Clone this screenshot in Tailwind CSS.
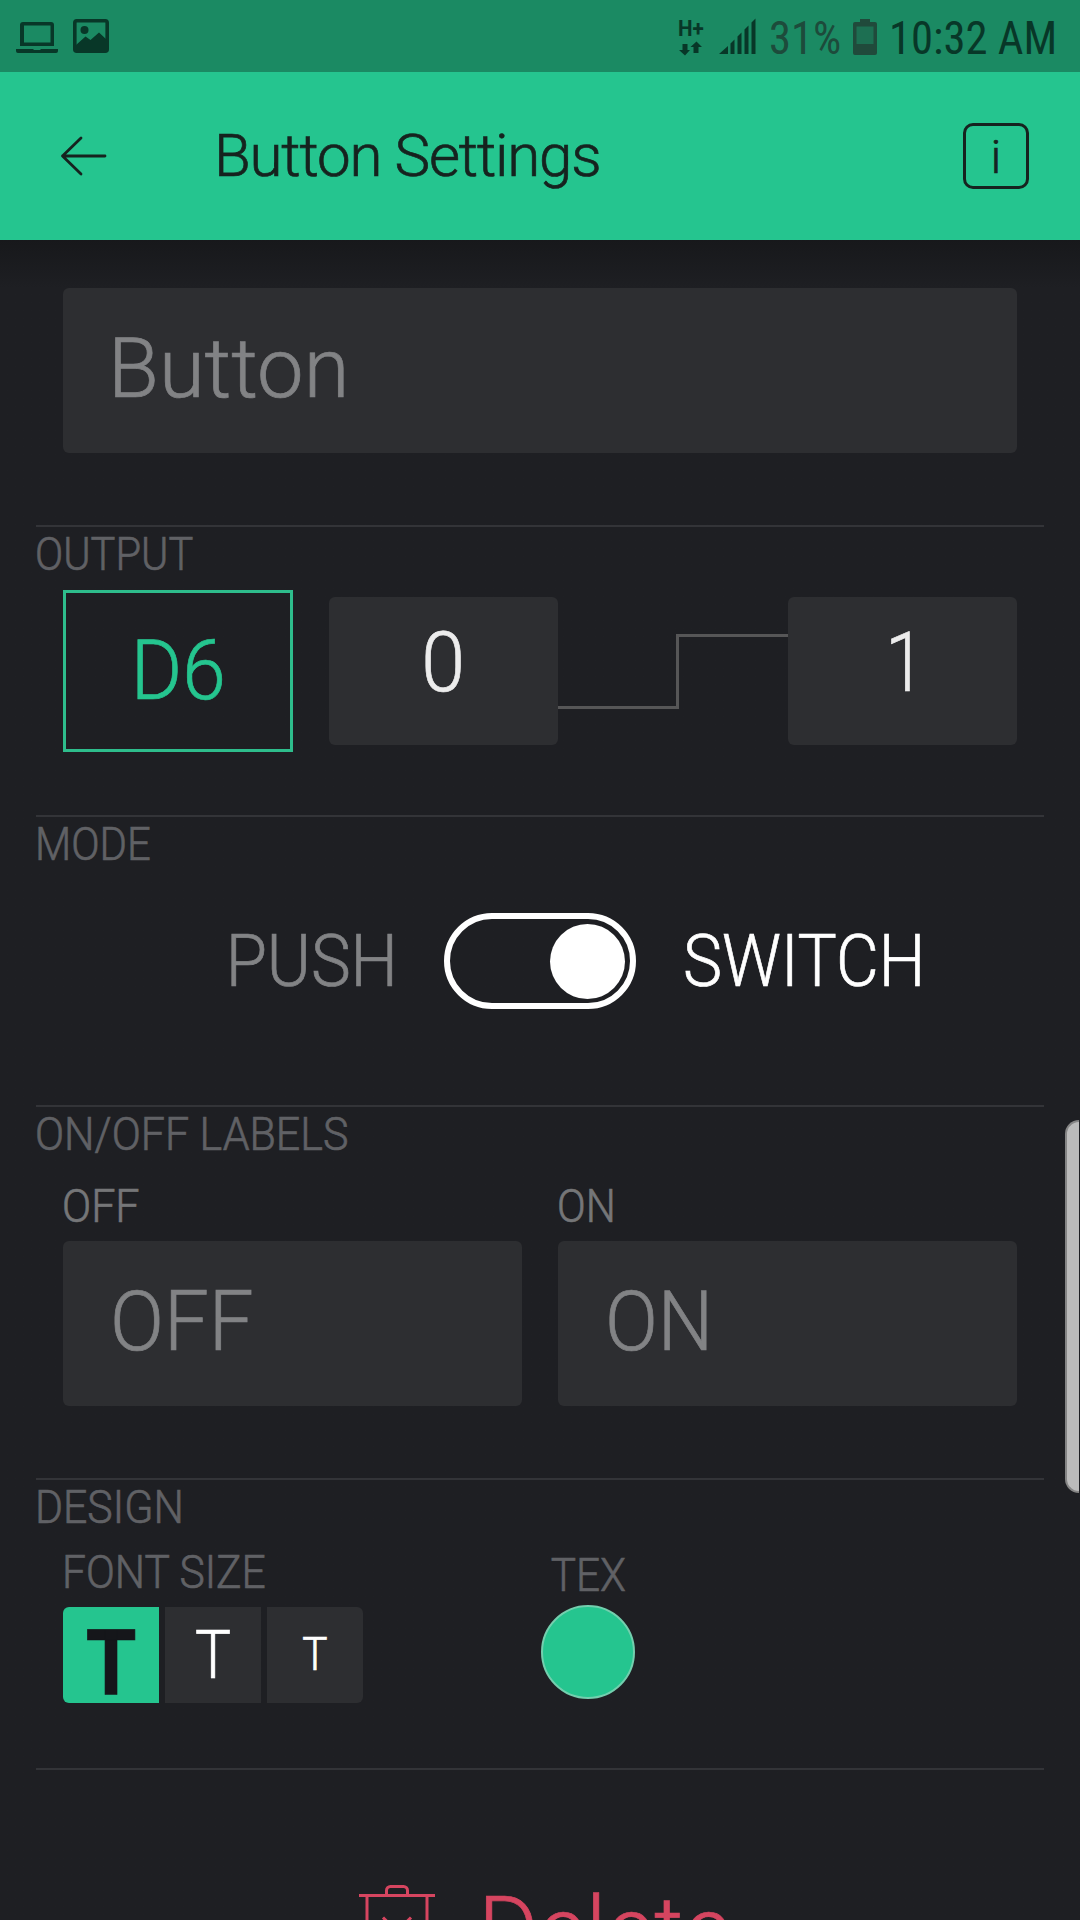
<!DOCTYPE html>
<html lang="en">
<head>
    <meta charset="UTF-8" />
    <title>Button Settings</title>
    <script src="https://cdn.jsdelivr.net/npm/@tailwindcss/browser@4"></script>
</head>
<body class="bg-[#1e1f23] font-['Roboto',sans-serif] font-light">
<div class="relative flex h-[1920px] w-[1080px] flex-col overflow-hidden">

    <!-- Status bar -->
    <div class="flex h-[72px] shrink-0 items-center bg-[#1b8a63] pl-4 text-[#083728]">
        <svg class="mt-[3px] h-[33px] w-[42px]" viewBox="0 0 42 33" fill="currentColor">
            <path fill-rule="evenodd" d="M7 1h28a3 3 0 0 1 3 3v21H4V4a3 3 0 0 1 3-3zm1 3.500v17h26.500v-17z" />
            <path d="M0 28h17l1 1h6l1-1h17v2a2 2 0 0 1-2 2H2a2 2 0 0 1-2-2z" />
        </svg>
        <svg class="ml-[15px] h-[34px] w-9" viewBox="0 0 36 34">
            <rect x="1.800" y="1.800" width="32.400" height="30.400" rx="2" fill="none" stroke="currentColor" stroke-width="3.600" />
            <circle cx="11.500" cy="11" r="4" fill="currentColor" />
            <path fill="currentColor" d="M3 26l9.500-8.500 5 3.500 8.500-7.500 8 7.500v11H3z" />
        </svg>
        <div class="ml-auto flex w-[403px] items-center">
            <div class="flex w-[42px] flex-col pt-[3px] pl-px">
                <span class="h-[20px] origin-left scale-x-[0.94] text-[22px] leading-[20px] font-bold">H+</span>
                <svg class="mt-[2px] ml-px h-[15px] w-[23px]" viewBox="0 0 23 15" fill="currentColor">
                    <path d="M3.500 3h5v6H11l-5 5.500L0 9h3.500z" />
                    <path d="M14.500 12h5V6H23l-5.500-5.500L11.500 6h3z" />
                </svg>
            </div>
            <svg class="h-9 w-[37px]" viewBox="0 0 37 36" fill="currentColor">
                <path d="M0 36L9 28v8zM11.500 25.500l4-4V36h-4zM18.500 18.500l4-4V36h-4zM25.500 11.500l4-4V36h-4zM32.500 4.500l4-4V36h-4z" />
            </svg>
            <span class="ml-[13px] w-[84px] pt-1 text-[46px] leading-[72px] font-normal text-[#1d4b3b] [font-stretch:75%]"><span class="inline-block origin-left scale-x-[0.97]">31%</span></span>
            <svg class="mt-0.5 h-9 w-6" viewBox="0 0 24 36">
                <path fill="#204a3b" d="M7 0h10v3h5a2 2 0 0 1 2 2v29a2 2 0 0 1-2 2H2a2 2 0 0 1-2-2V5a2 2 0 0 1 2-2h5z" />
                <path fill="#1d6f52" d="M3.500 7.500h17V25h-17z" />
            </svg>
            <span class="ml-3 pt-1 text-[46px] leading-[72px] font-normal whitespace-nowrap [font-stretch:75%]"><span class="inline-block origin-left scale-x-[0.97]">10:32 AM</span></span>
        </div>
    </div>

    <!-- App bar -->
    <header class="flex h-[168px] shrink-0 items-center bg-[#25c58f] pr-[51px] pl-[60px] text-[#16231f] [-webkit-text-stroke:0.7px]">
        <svg class="h-10 w-[47px]" viewBox="0 0 47 40" fill="none" stroke="currentColor" stroke-width="2.800" stroke-linecap="round" stroke-linejoin="round">
            <path d="M21 2L2.500 20 21 38M2.500 20H45" />
        </svg>
        <h1 class="ml-[107px] text-[60px] leading-[70px] tracking-[-1.2px]">Button Settings</h1>
        <button class="ml-auto flex h-[66px] w-[66px] justify-center rounded-[10px] border-3 border-current text-[46px] leading-[62px]">i</button>
    </header>

    <main class="flex flex-col bg-linear-to-b from-[#17181b] to-[#1e1f23] to-[48px] px-9 [-webkit-text-stroke:0.7px]">
        <div class="px-[27px] pt-12 pb-[72px]">
            <div class="flex h-[165px] items-center rounded-md bg-[#2d2e31] pb-1 pl-[45px] text-[83px] leading-none text-[#828385]">Button</div>
        </div>

        <section class="h-[290px] border-t-2 border-[#333438]">
            <h2 class="-ml-px origin-left scale-x-[0.895] text-[46.5px] leading-[54px] text-[#606165]">OUTPUT</h2>
            <div class="mt-[9px] flex items-center px-[27px] text-[83px] leading-none">
                <div class="flex h-[162px] w-[230px] items-center justify-center border-3 border-[#2ebd8c] pb-0.5 text-[#25c58f]"><span class="scale-x-[0.945]">D6</span></div>
                <div class="ml-9 flex h-[148px] w-[229px] items-center justify-center rounded-md bg-[#2d2e31] pb-[18px] text-[#ececec]"><span class="scale-x-[0.95]">0</span></div>
                <svg class="h-[148px] w-[230px]" viewBox="0 0 230 148" fill="none" stroke="#565657" stroke-width="3">
                    <path d="M0 110.500H119.500V38.500H230" />
                </svg>
                <div class="flex h-[148px] w-[229px] items-center justify-center rounded-md bg-[#2d2e31] pb-[18px] pl-1.5 text-[#ececec]"><span class="scale-x-[0.86]">1</span></div>
            </div>
        </section>

        <section class="h-[290px] border-t-2 border-[#333438]">
            <h2 class="-ml-px origin-left scale-x-[0.9] text-[46.5px] leading-[54px] text-[#606165]">MODE</h2>
            <div class="mt-[42px] grid h-24 grid-cols-[1fr_192px_1fr] items-center text-[72px] leading-none">
                <span class="mr-[46px] origin-right scale-x-[0.93] pt-px text-right text-[#828385]">PUSH</span>
                <div class="flex h-24 items-center justify-end rounded-full border-6 border-white pr-[5px]">
                    <div class="h-[75px] w-[75px] rounded-full bg-white"></div>
                </div>
                <span class="ml-[47px] origin-left scale-x-[0.914] pt-px text-white">SWITCH</span>
            </div>
        </section>

        <section class="h-[373px] border-t-2 border-[#333438]">
            <h2 class="-ml-px origin-left scale-x-[0.924] text-[46.5px] leading-[54px] text-[#606165]">ON/OFF LABELS</h2>
            <div class="grid grid-cols-2 gap-9 px-[27px]">
                <div>
                    <p class="-ml-px h-20 origin-left scale-x-[0.925] pt-[18px] text-[46.5px] leading-[54px] text-[#757678]">OFF</p>
                    <div class="flex h-[165px] items-center rounded-md bg-[#2d2e31] pb-1 pl-[47px] text-[83px] leading-none text-[#828385]"><span class="origin-left scale-x-[0.96]">OFF</span></div>
                </div>
                <div>
                    <p class="-ml-px h-20 origin-left scale-x-[0.91] pt-[18px] text-[46.5px] leading-[54px] text-[#757678]">ON</p>
                    <div class="flex h-[165px] items-center rounded-md bg-[#2d2e31] pb-1 pl-[47px] text-[83px] leading-none text-[#828385]"><span class="origin-left scale-x-[0.94]">ON</span></div>
                </div>
            </div>
        </section>

        <section class="h-[290px] border-t-2 border-[#333438]">
            <h2 class="-ml-px origin-left scale-x-[0.92] text-[46.5px] leading-[54px] text-[#606165]">DESIGN</h2>
            <div class="flex px-[27px]">
                <div class="w-[478px]">
                    <p class="-ml-px h-[73px] origin-left scale-x-[0.916] pt-[11px] text-[46.5px] leading-[54px] text-[#606165]">FONT SIZE</p>
                    <div class="flex gap-1.5 text-center text-white">
                        <div class="h-24 w-24 rounded-l-md bg-[#25c58f] text-[91px] leading-[113px] font-bold text-[#15161a]"><span class="inline-block scale-x-[0.9]">T</span></div>
                        <div class="h-24 w-24 bg-[#2d2e31] text-[67px] leading-[97px]"><span class="inline-block scale-x-[0.9]">T</span></div>
                        <div class="h-24 w-24 rounded-r-md bg-[#2d2e31] text-[46.5px] leading-[95px]"><span class="inline-block scale-x-[0.91]">T</span></div>
                    </div>
                </div>
                <div class="flex w-[94px] flex-col items-center">
                    <p class="h-[71px] scale-x-[0.91] pt-[14px] text-[46.5px] leading-[54px] text-[#606165]">TEX</p>
                    <div class="h-[94px] w-[94px] rounded-full border-2 border-[#73cfae] bg-[#25c58f]"></div>
                </div>
            </div>
        </section>

        <!-- Delete row, runs past the bottom edge -->
        <section class="h-[152px] overflow-hidden border-t-2 border-[#333438] text-[#d64560]">
            <div class="flex pt-[114px] pl-[323px]">
                <svg class="h-24 w-[76px] shrink-0" viewBox="0 0 76 96" fill="none" stroke="currentColor" stroke-width="3">
                    <path d="M0 11.500H76M27.500 11.500V6.500a4 4 0 0 1 4-4h13a4 4 0 0 1 4 4v5M8 11.500V92h60V11.500M24 33.500l28 28M52 33.500l-28 28" />
                </svg>
                <span class="-mt-[7px] ml-[43px] text-[92px] leading-[108px]">Delete</span>
            </div>
        </section>
    </main>

    <!-- Edge panel handle -->
    <div class="absolute top-[1120px] right-px h-[373px] w-[14px] rounded-l-[18px] border-y-2 border-l-2 border-[#858585] bg-[#bbbbbb]"></div>
</div>
</body>
</html>
